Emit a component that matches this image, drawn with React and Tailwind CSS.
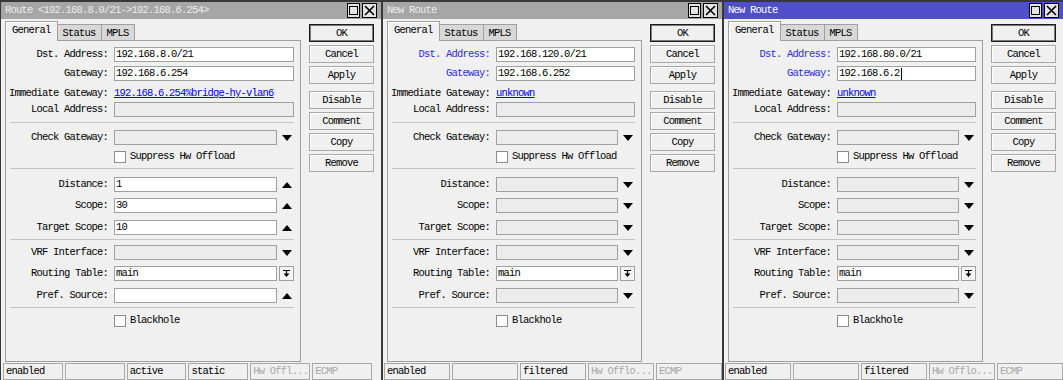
import React from 'react';

const Tri = ({ up }) => (
  <svg width="10" height="6" viewBox="0 0 10 6" className="block">
    <polygon points={up ? '0,6 10,6 5,0' : '0,0 10,0 5,6'} fill="#000" />
  </svg>
);

const Field = ({ value, off, cursor }) => (
  <div className={`h-[15px] flex-1 min-w-0 border border-[#a0a0a0] ${off ? 'bg-[#ececec]' : 'bg-white'} flex items-center px-[1px] whitespace-nowrap overflow-hidden`}>
    {value}
    {cursor && <span className="w-px h-[12px] bg-black ml-[1px]" />}
  </div>
);

const Row = ({ label, blue, mt, children }) => (
  <div className={`flex items-center h-[15px] ${mt}`}>
    <div className={`w-[102px] shrink-0 text-right whitespace-nowrap ${blue ? 'text-[#2d2dd2]' : 'text-black'}`}>{label}</div>
    <div className="ml-[6px] mr-[6px] flex-1 flex items-center min-w-0">{children}</div>
  </div>
);

const Arrow = ({ up }) => (
  <div className="w-[17px] shrink-0 flex justify-end pr-[2px]">
    <Tri up={up} />
  </div>
);

const Sep = ({ mt }) => <div className={`${mt} ml-[4px] mr-[6px] h-px bg-[#c4c4c4]`} />;

const Check = ({ label, mt }) => (
  <Row label="" mt={mt}>
    <div className="w-[12px] h-[12px] border border-[#8c8c8c] bg-white" />
    <span className="ml-[4px]">{label}</span>
  </Row>
);

const Btn = ({ children, def, mt }) => (
  <div className={`h-[18px] flex items-center justify-center bg-[#f0f0f0] ${mt} ${def ? 'border border-[#1a1a1a] shadow-[inset_0_0_0_1px_#7a7a7a]' : 'border border-[#a8a8a8] shadow-[inset_1px_1px_0_#ffffff]'}`}>
    {children}
  </div>
);

const Window = ({ w, title, active, blue, dst, gw, cursor, imm, spin, status, statusPad }) => (
  <div className={`${w} shrink-0 h-full flex flex-col bg-[#f0f0f0]`}>
    <div className={`h-[17px] shrink-0 flex items-center pl-[4px] pr-[4px] ${active ? 'bg-[#4f4fca] text-white' : 'bg-[#a6a6a6] text-[#ececec]'}`}>
      <span className="flex-1 whitespace-nowrap">{title}</span>
      <div className="w-[13px] h-[15px] border border-black bg-[#e4e4e4] flex items-center justify-center">
        <div className="w-[9px] h-[9px] border border-black" />
      </div>
      <div className="ml-[2px] w-[15px] h-[15px] border border-black bg-[#e4e4e4] flex items-center justify-center">
        <svg width="11" height="11" viewBox="0 0 11 11">
          <path d="M1 1L10 10M10 1L1 10" stroke="#000" strokeWidth="1.6" />
        </svg>
      </div>
    </div>

    <div className="flex">
      <div className="ml-[4px] flex-1 min-w-0 flex flex-col">
        <div className="h-[21px] pt-[2px] flex items-end">
          <div className="h-[20px] -mb-px relative z-10 px-[6px] pt-[3px] border border-b-0 border-[#a0a0a0] bg-[#f0f0f0] shadow-[inset_1px_1px_0_#ffffff]">General</div>
          <div className="h-[16px] px-[5px] pt-[3px] border border-b-0 border-[#a0a0a0] bg-[#d8d8d8] border-l-0">Status</div>
          <div className="h-[16px] px-[5px] pt-[3px] border border-b-0 border-[#a0a0a0] bg-[#d8d8d8] border-l-0">MPLS</div>
        </div>
        <div className="h-[322px] border border-[#a0a0a0] flex flex-col">
          <Row label="Dst. Address:" blue={blue} mt="mt-[6px]">
            <Field value={dst} />
          </Row>
          <Row label="Gateway:" blue={blue} mt="mt-[4px]">
            <Field value={gw} cursor={cursor} />
          </Row>
          <Row label="Immediate Gateway:" mt="mt-[5px]">
            <span className="text-[#0000ee] underline whitespace-nowrap">{imm}</span>
          </Row>
          <Row label="Local Address:" mt="mt-px">
            <Field value="" off />
          </Row>
          <Sep mt="mt-[5px]" />
          <Row label="Check Gateway:" mt="mt-[7px]">
            <Field value="" off />
            <Arrow />
          </Row>
          <Check label="Suppress Hw Offload" mt="mt-[4px]" />
          <Sep mt="mt-[4px]" />
          <Row label="Distance:" mt="mt-[8px]">
            <Field value={spin ? '1' : ''} off={!spin} />
            <Arrow up={spin} />
          </Row>
          <Row label="Scope:" mt="mt-[6px]">
            <Field value={spin ? '30' : ''} off={!spin} />
            <Arrow up={spin} />
          </Row>
          <Row label="Target Scope:" mt="mt-[7px]">
            <Field value={spin ? '10' : ''} off={!spin} />
            <Arrow up={spin} />
          </Row>
          <Sep mt="mt-[4px]" />
          <Row label="VRF Interface:" mt="mt-[5px]">
            <Field value="" off />
            <Arrow />
          </Row>
          <Row label="Routing Table:" mt="mt-[6px]">
            <Field value="main" />
            <div className="ml-[2px] w-[15px] h-[15px] shrink-0 border border-[#a0a0a0] bg-[#f4f4f4] flex items-center justify-center">
              <svg width="9" height="9" viewBox="0 0 9 9">
                <path d="M1 1.5H8M4.5 1.5V5" stroke="#000" strokeWidth="1.2" />
                <polygon points="1.5,4.5 7.5,4.5 4.5,8" fill="#000" />
              </svg>
            </div>
          </Row>
          <Row label="Pref. Source:" mt="mt-[7px]">
            <Field value="" off={!spin} />
            <Arrow up={spin} />
          </Row>
          <Sep mt="mt-[4px]" />
          <Check label="Blackhole" mt="mt-[5px]" />
        </div>
      </div>

      <div className="ml-[8px] mr-[7px] w-[65px] shrink-0 flex flex-col pt-[5px]">
        <Btn def>OK</Btn>
        <Btn mt="mt-[3px]">Cancel</Btn>
        <Btn mt="mt-[3px]">Apply</Btn>
        <Btn mt="mt-[7px]">Disable</Btn>
        <Btn mt="mt-[3px]">Comment</Btn>
        <Btn mt="mt-[3px]">Copy</Btn>
        <Btn mt="mt-[3px]">Remove</Btn>
      </div>
    </div>

    <div className={`mt-px h-[20px] flex gap-[2px] ${statusPad}`}>
      {status.map((s, i) => (
        <div key={i} className={`flex-1 min-w-0 border border-[#a8a8a8] flex items-center px-[2px] whitespace-nowrap overflow-hidden ${s.gray ? 'text-[#a8a8a8]' : 'text-black'}`}>
          {s.t}
        </div>
      ))}
    </div>
  </div>
);

export default function App() {
  const gray = (t) => ({ t, gray: true });
  const s1 = [{ t: 'enabled' }, { t: '' }, { t: 'active' }, { t: 'static' }, gray('Hw Offl...'), gray('ECMP')];
  const s2 = [{ t: 'enabled' }, { t: '' }, { t: 'filtered' }, gray('Hw Offlo...'), gray('ECMP')];

  return (
    <div className="w-[1063px] h-[380px] overflow-hidden bg-[#383838] flex gap-[2px] pl-px pt-[2px] font-['Liberation_Mono',monospace] text-[10.5px] tracking-[-0.8px] leading-none text-black">
      <Window
        w="w-[380px]"
        title="Route <192.168.8.0/21->192.168.6.254>"
        dst="192.168.8.0/21"
        gw="192.168.6.254"
        imm="192.168.6.254%bridge-hy-vlan6"
        spin
        status={s1}
        statusPad="pl-[2px] pr-[9px]"
      />
      <Window
        w="w-[339px]"
        title="New Route"
        blue
        dst="192.168.120.0/21"
        gw="192.168.6.252"
        imm="unknown"
        status={s2}
        statusPad="pl-px pr-0"
      />
      <Window
        w="w-[339px]"
        title="New Route"
        active
        blue
        dst="192.168.80.0/21"
        gw="192.168.6.2"
        cursor
        imm="unknown"
        status={s2}
        statusPad="pl-px pr-0"
      />
    </div>
  );
}
